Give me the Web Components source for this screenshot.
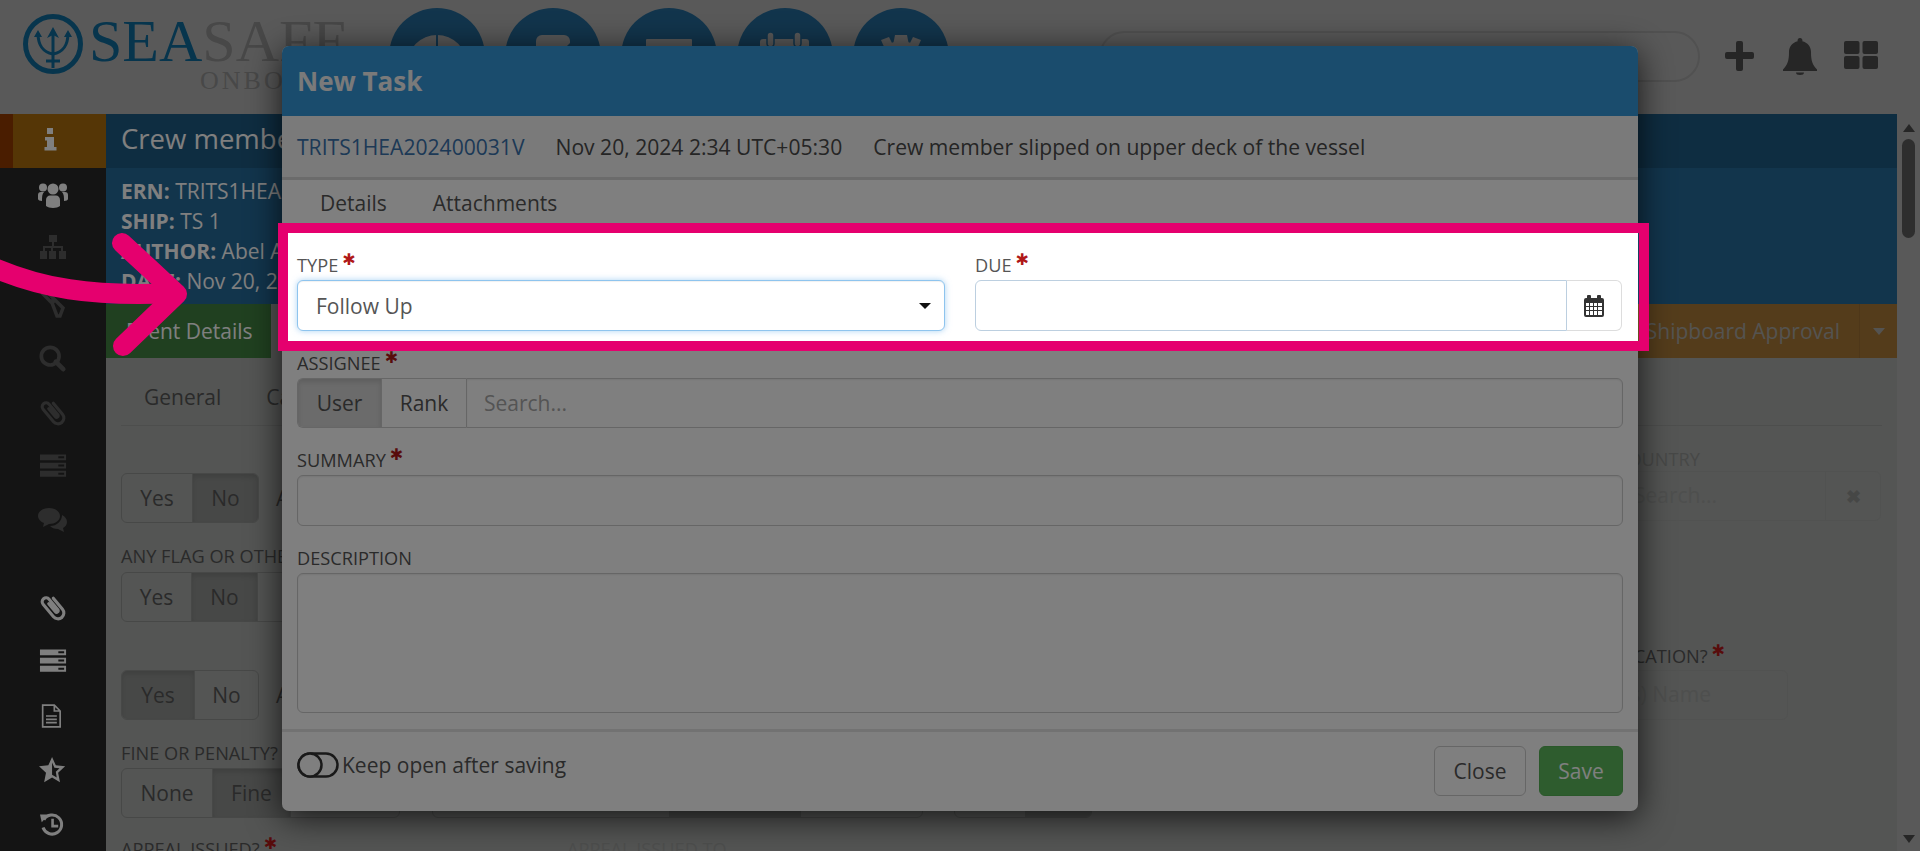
<!DOCTYPE html>
<html lang="en">
<head>
<meta charset="utf-8">
<title>New Task</title>
<style>
  html, body { margin: 0; height: 100%; overflow: hidden; font-family: "Open Sans", "Noto Sans", sans-serif; background: #b3b3b3; }
</style>
</head>
<body>
<sea-app></sea-app>

<script>
class SeaHeader extends HTMLElement {
  constructor() {
    super();
    this.attachShadow({ mode: 'open' }).innerHTML = `
      <style>
        :host { display: flex; height: 114px; background: #b3b3b3; align-items: flex-start; }
        .logo { width: 389px; height: 114px; display: flex; box-sizing: border-box; padding: 14px 0 0 23px; font-family: "Liberation Serif", serif; }
        .logo svg { width: 60px; height: 60px; flex: none; }
        .word { margin-left: 6px; position: relative; }
        .big { font-size: 60px; line-height: 54px; color: #909090; white-space: nowrap; height: 54px; }
        .big b { font-weight: 400; color: #0f6a9a; }
        .small { font-size: 26px; line-height: 26px; letter-spacing: 3px; color: #909090; margin: 0 0 0 111px; }
        nav { display: flex; gap: 20px; margin-top: 8px; }
        .round { width: 96px; height: 96px; border-radius: 50%; background: #246a99; }
        .round svg { width: 96px; height: 96px; display: block; }
        .search { width: 601px; height: 51px; box-sizing: border-box; border: 2px solid #a2a2a2; border-radius: 26px; margin: 31px 0 0 150px; }
        .tools { display: flex; margin: 38px 0 0 25px; }
        .tools svg { display: block; fill: #4c4c4c; }
      </style>
      <div class="logo">
        <svg viewBox="0 0 60 60">
          <circle cx="30" cy="30" r="27.500" fill="none" stroke="#0f6a9a" stroke-width="5"/>
          <path d="M15 19C15 32 20 38 30 40C40 38 45 32 45 19" fill="none" stroke="#0f6a9a" stroke-width="3"/>
          <path d="M30 18V54M23 47H37" fill="none" stroke="#0f6a9a" stroke-width="3"/>
          <path d="M24 24L30 13L36 24L30 21zM11 23L15 16L19 23zM41 23L45 16L49 23z" fill="#0f6a9a"/>
        </svg>
        <div class="word">
          <div class="big"><b>SEA</b>SAFE</div>
          <div class="small">ONBOARD</div>
        </div>
      </div>
      <nav>
        <div class="round"><svg viewBox="0 0 96 96"><circle cx="48" cy="57" r="30" fill="#b3b3b3"/><path d="M47 25h2v32h-2z" fill="#246a99"/></svg></div>
        <div class="round"><svg viewBox="0 0 96 96"><rect x="31" y="27" width="34" height="40" rx="6" fill="#b3b3b3"/><path d="M48 52l18-18 5 5-18 18z" fill="#246a99"/></svg></div>
        <div class="round"><svg viewBox="0 0 96 96"><rect x="25" y="31" width="46" height="8" rx="1" fill="#b3b3b3"/><rect x="25" y="42" width="46" height="30" rx="2" fill="#b3b3b3"/></svg></div>
        <div class="round"><svg viewBox="0 0 96 96"><rect x="23" y="31" width="49" height="42" rx="3" fill="#b3b3b3"/><rect x="30" y="24" width="7" height="15" rx="3.500" fill="#b3b3b3" stroke="#246a99" stroke-width="1.500"/><rect x="57" y="24" width="7" height="15" rx="3.500" fill="#b3b3b3" stroke="#246a99" stroke-width="1.500"/></svg></div>
        <div class="round"><svg viewBox="0 0 96 96"><circle cx="48" cy="57" r="24" fill="#b3b3b3"/><path d="M42 27h12l2 10-16 0zM28 32l8-3 4 8-8 4zM68 32l-8-3-4 8 8 4z" fill="#b3b3b3"/></svg></div>
      </nav>
      <div class="search"></div>
      <div class="tools">
        <svg width="29" height="30" viewBox="0 0 29 30" style="margin-top:3px"><path d="M11 2a2 2 0 0 1 2-2h3a2 2 0 0 1 2 2v9h9a2 2 0 0 1 2 2v3a2 2 0 0 1-2 2h-9v10a2 2 0 0 1-2 2h-3a2 2 0 0 1-2-2V18H2a2 2 0 0 1-2-2v-3a2 2 0 0 1 2-2h9z"/></svg>
        <svg width="34" height="37" viewBox="0 0 34 37" style="margin-left:29px"><path d="M17 0a2.400 2.400 0 0 1 2.300 3.200C24.500 4.300 28 8.700 28 14c0 9 1.500 12.500 6 17.500V33H0v-1.500C4.500 26.500 6 23 6 14c0-5.300 3.500-9.700 8.700-10.800A2.400 2.400 0 0 1 17 0zM13 34.500h8a4 2.500 0 0 1-8 0z"/></svg>
        <svg width="34" height="28" viewBox="0 0 34 28" style="margin:3px 0 0 27px"><rect width="15.500" height="13" rx="2"/><rect x="18.500" width="15.500" height="13" rx="2"/><rect y="15" width="15.500" height="13" rx="2"/><rect x="18.500" y="15" width="15.500" height="13" rx="2"/></svg>
      </div>
    `;
  }
}

class SeaSidebar extends HTMLElement {
  constructor() {
    super();
    const dim = '#5a5a5a';
    const clip = '<g transform="translate(15 14) scale(1.3) rotate(-40) translate(-12 -12)"><path fill="none" stroke="currentColor" stroke-width="2.400" stroke-linecap="round" d="M16.500 7v11a4.500 4.500 0 0 1-9 0V5.500a3 3 0 0 1 6 0V16a1.200 1.200 0 0 1-2.400 0V8"/></g>';
    const server = '<path d="M1 1h27v6H1zM1 9.500h27v6H1zM1 18h27v6H1z"/><path d="M20 3h6v2h-6zM20 11.500h6v2h-6zM20 20h6v2h-6z" fill="#282828"/>';
    const items = [
      ['<path d="M9 1h6v6H9zM7 10h9v10h2.500v3.500h-12V20H9v-6.500H7z"/>', '#fff', 30],
      ['<circle cx="15" cy="8" r="5.500"/><circle cx="5" cy="6.500" r="4"/><circle cx="25" cy="6.500" r="4"/><path d="M8 25v-6c0-3 2-4.500 4-4.500h6c2 0 4 1.500 4 4.500v6c-3 2.500-11 2.500-14 0zM0 18v-4c0-2 1-3 3-3h3c-2 2-2 5-2 9-2 0-4-1-4-2zM30 18v-4c0-2-1-3-3-3h-3c2 2 2 5 2 9 2 0 4-1 4-2z"/>', '#fff', 30],
      ['<path d="M11 0h8v7h-3v4h9v5h3v8h-7v-8h2v-3h-8v3h3v8h-7v-8h2v-3H7v3h2v8H2v-8h3v-5h9V7h-3z"/>', dim, 30],
      ['<path fill="none" stroke="currentColor" stroke-width="3.500" d="M5 4l3-3 8 8-3 3zM14 13l3-3 8 8-3 8-3 0z"/>', dim, 30],
      ['<circle cx="12" cy="12" r="9.500" fill="none" stroke="currentColor" stroke-width="4"/><path d="M18 18l8 8" stroke="currentColor" stroke-width="5" stroke-linecap="round"/>', dim, 28],
      [clip, dim, 30],
      [server, dim, 29],
      ['<path d="M11 1c6 0 11 3.500 11 8s-5 8-11 8l-6 3 1-4C3 15 0 12 0 9c0-4.500 5-8 11-8z"/><path d="M24 8c3 1.500 5 4 5 7s-2 5-4 6l1 4-6-3c-4 0-6-1-8-3 7 0 12-5 12-11z"/>', dim, 30],
      [clip, '#fff', 30],
      [server, '#fff', 29],
      ['<path fill="none" stroke="currentColor" stroke-width="2" d="M2 1h14l7 7v19H2zM16 1v7h7"/><path d="M6 13h13v2H6zM6 17h13v2H6zM6 21h13v2H6z"/>', '#fff', 25],
      ['<path fill-rule="evenodd" d="M14 0l4 9 10 1-7.500 7 2 10-8.500-5-8.500 5 2-10L0 10l10-1zM14 6v13l5 3-1-6 4-4-5.500-.5z"/>', '#fff', 28],
      ['<path fill="none" stroke="currentColor" stroke-width="3.500" d="M4.500 9a11 11 0 1 1-1 9"/><path d="M0 3l10 0-8 9z"/><path d="M13 8h3v7h5v3h-8z"/>', '#fff', 26]
    ];
    const cells = items.map(([art, color, size], i) => `
      <div class="cell ${i === 0 ? 'on' : ''} ${i === 8 ? 'gap' : ''}" style="color:${color}">
        <svg width="${size}" height="30" viewBox="0 0 30 28" preserveAspectRatio="xMidYMid meet" fill="currentColor">${art}</svg>
      </div>`).join('');
    this.attachShadow({ mode: 'open' }).innerHTML = `
      <style>
        :host { display: block; width: 106px; background: #282828; flex: none; }
        .cell { height: 54.300px; display: flex; align-items: center; justify-content: center; }
        .on { height: 54px; background: #aa6d0d; border-left: 13px solid #943a00; box-sizing: border-box; padding-right: 13px; }
        .gap { margin-top: 32px; }
      </style>
      ${cells}
    `;
  }
}

class BtnGroup extends HTMLElement {
  constructor() {
    super();
    this.attachShadow({ mode: 'open' }).innerHTML = `
      <style>
        :host { display: inline-flex; border: 1.500px solid var(--line, #8f918f); border-radius: 6px; height: 50px; box-sizing: border-box; flex: none; overflow: hidden; }
      </style>
      <slot></slot>
    `;
  }
}

class GroupBtn extends HTMLElement {
  constructor() {
    super();
    this.attachShadow({ mode: 'open' }).innerHTML = `
      <style>
        :host { display: flex; align-items: center; justify-content: center; font-size: 21px; color: var(--ink, #555); box-sizing: border-box; border-left: 1.500px solid var(--line, #8f918f); }
        :host(:first-child) { border-left: 0; }
        :host([on]) { background: var(--active, #8f918f); box-shadow: inset 0 3px 5px rgba(0,0,0,.12); }
      </style>
      <slot></slot>
    `;
  }
}

class FieldLabel extends HTMLElement {
  constructor() {
    super();
    this.attachShadow({ mode: 'open' }).innerHTML = `
      <style>
        :host { display: block; font-size: 18.200px; line-height: 24px; height: 24px; color: var(--ink, #555); white-space: nowrap; }
        i { font-style: normal; font-size: 16px; line-height: 0; color: #b01818; position: relative; top: -7px; font-family: "DejaVu Sans", sans-serif; display: none; margin-left: 4px; }
        :host([req]) i { display: inline; }
      </style>
      <slot></slot><i>✱</i>
    `;
  }
}

class SeaRecord extends HTMLElement {
  constructor() {
    super();
    this.attachShadow({ mode: 'open' }).innerHTML = `
      <style>
        :host { display: block; flex: 1; min-width: 0; font-size: 21px; color: #555; background: #a8aaa8; height: 737px; overflow: hidden; }
        .title { height: 54px; background: #1d5a82; color: #fff; font-size: 27.500px; line-height: 50px; padding-left: 15px; white-space: nowrap; }
        .info { height: 136px; background: #246a99; color: #fff; padding: 8px 15px 0; box-sizing: border-box; font-size: 21px; line-height: 30px; }
        .info b { font-weight: 700; }
        .bar { height: 54px; display: flex; justify-content: space-between; }
        .green { width: 165px; background: #408140; color: #fff; line-height: 54px; padding-left: 20px; box-sizing: border-box; white-space: nowrap; overflow: hidden; }
        .amber { width: 520px; background: #a87937; display: flex; align-items: center; justify-content: flex-end; }
        .amber span { padding-right: 19px; line-height: 52px; color: #a9a7a2; }
        .caret { width: 37px; height: 100%; border-left: 1px solid #9c6f33; display: flex; align-items: center; justify-content: center; }
        .caret::after { content: ""; border: 6px solid transparent; border-top: 7px solid #a9a7a2; border-bottom: 0; }
        .form { padding: 0 15px; }
        .tabs { height: 68px; border-bottom: 1.500px solid #9b9d9b; display: flex; align-items: center; gap: 45px; padding: 0 23px; box-sizing: border-box; }
        .tabs span { position: relative; top: 5px; }
        .row { display: flex; align-items: flex-start; }
        .tail { margin-left: 17px; line-height: 50px; white-space: nowrap; }
        .r1 { margin-top: 47px; justify-content: space-between; }
        .r1 .right { display: flex; flex-direction: column; margin-right: 1px; margin-top: -26px; }
        .country { width: 265px; height: 50px; border: 1.500px solid #a3a5a3; border-radius: 6px; box-sizing: border-box; display: flex; color: #9c9e9c; }
        .country span { flex: 1; padding: 0 0 0 17px; line-height: 46px; }
        .country em { width: 54px; border-left: 1.500px solid #a3a5a3; font-style: normal; display: flex; align-items: center; justify-content: center; font-weight: 700; font-size: 18px; color: #8d8f8d; }
        .flag { margin-top: 21px; }
        .r2 { margin-top: 4px; }
        .r3 { margin-top: 48px; justify-content: space-between; }
        .auth { margin: -26px 94px 0 0; width: 300px; }
        .auth .box { height: 50px; border: 1.500px solid #a3a5a3; border-radius: 6px; box-sizing: border-box; text-align: right; padding-right: 76px; line-height: 46px; color: #9c9e9c; }
        .auth field-label { text-align: right; margin-right: 63px; margin-bottom: 2px; }
        .fine { margin-top: 21px; }
        .r4 { margin-top: 3px; }
        .blank { height: 50px; border: 1.500px solid #8f918f; border-radius: 6px; box-sizing: border-box; display: flex; overflow: hidden; }
        .blank div { background: #8f918f; }
        .appeal { margin-top: 19px; display: flex; }
        .appeal .to { margin-left: 290px; color: #9b9d9b; }
      </style>
      <div class="title">Crew member slipped on upper deck of the vessel</div>
      <div class="info">
        <div><b>ERN:</b> TRITS1HEA202400031V</div>
        <div><b>SHIP:</b> TS 1</div>
        <div><b>AUTHOR:</b> Abel Adams</div>
        <div><b>DATE:</b> Nov 20, 2024</div>
      </div>
      <div class="bar">
        <div class="green">Event Details</div>
        <div class="amber"><span>Shipboard Approval</span><div class="caret"></div></div>
      </div>
      <div class="form">
        <div class="tabs"><span>General</span><span>Casualty</span></div>
        <div class="row r1">
          <btn-group><group-btn style="width:70px">Yes</group-btn><group-btn style="width:66px" on>No</group-btn></btn-group>
          <div class="tail" style="flex:1">Any</div>
          <div class="right">
            <field-label style="color:#8f918f">COUNTRY</field-label>
            <div class="country"><span>Search...</span><em>✖</em></div>
          </div>
        </div>
        <field-label class="flag">ANY FLAG OR OTHER</field-label>
        <div class="row r2">
          <btn-group><group-btn style="width:69px">Yes</group-btn><group-btn style="width:66px" on>No</group-btn><group-btn style="width:60px"></group-btn></btn-group>
        </div>
        <div class="row r3">
          <btn-group><group-btn style="width:72px" on>Yes</group-btn><group-btn style="width:64px">No</group-btn></btn-group>
          <div class="tail" style="flex:1">Any</div>
          <div class="auth">
            <field-label req>CLASSIFICATION?</field-label>
            <div class="box">(s) Name</div>
          </div>
        </div>
        <field-label class="fine">FINE OR PENALTY?</field-label>
        <div class="row r4" style="gap:32px">
          <btn-group><group-btn style="width:90px">None</group-btn><group-btn style="width:78px" on>Fine</group-btn><group-btn style="width:109px">Warn</group-btn></btn-group>
          <div class="blank" style="width:491px"><div style="margin-left:236px;width:132px"></div></div>
          <div class="blank" style="width:138px;margin-left:-1px"><div style="margin-left:70px;width:68px"></div></div>
        </div>
        <div class="appeal">
          <field-label req>APPEAL ISSUED?</field-label>
          <field-label class="to">APPEAL ISSUED TO</field-label>
        </div>
      </div>
    `;
  }
}

class TaskModal extends HTMLElement {
  constructor() {
    super();
    this.attachShadow({ mode: 'open' }).innerHTML = `
      <style>
        :host { display: flex; flex-direction: column; position: absolute; left: 282px; top: 46px; width: 1356px; height: 765px; background: #fff; border-radius: 7px; box-shadow: 0 6px 34px rgba(0,0,0,.75); overflow: hidden; font-size: 21px; color: #555; --ink: #555; --line: #ccc; --active: #d6d6d6; }
        header { height: 70px; background: #3498db; font-size: 26px; font-weight: 700; line-height: 70px; padding-left: 15px; flex: none; color: #f4f4f4; }
        .sub { background: #f5f5f5; border-bottom: 3px solid #d6d6d6; display: flex; align-items: center; padding: 0 0 0 15px; flex: none; height: 61px; white-space: nowrap; font-size: 21.100px; }
        .sub a { color: #3a72ad; margin-right: 31px; }
        .sub span { margin-right: 31px; color: #4a4a4a; }
        .tabs { height: 46px; display: flex; padding-left: 38px; gap: 46px; align-items: center; flex: none; }
        form { flex: 1; padding: 27px 15px 0; display: flex; flex-direction: column; }
        .pair { display: grid; grid-template-columns: 648px 647px; gap: 30px; }
        .ctl { height: 51px; box-sizing: border-box; border: 1.500px solid #ccc; border-radius: 6px; margin-top: 3px; display: flex; align-items: center; background: #fff; box-shadow: inset 0 1px 2px rgba(0,0,0,.08); }
        .field { margin-bottom: 20px; }
        .select { border-color: #8ec4ee; box-shadow: 0 0 6px rgba(102,175,233,.55), inset 0 1px 1px rgba(0,0,0,.06); padding: 0 13px 0 18px; justify-content: space-between; color: #555; }
        .select::after { content: ""; border: 6px solid transparent; border-top: 6px solid #111; border-bottom: 0; }
        .date { padding: 0; justify-content: flex-end; box-shadow: none; border: 0; }
        .date .in { flex: 1; height: 100%; box-sizing: border-box; border: 1.500px solid #bccfe0; border-right: 1px solid #bccfe0; border-radius: 6px 0 0 6px; }
        .date .add { width: 55px; height: 100%; box-sizing: border-box; border: 1.500px solid #ddd; border-left: 0; border-radius: 0 6px 6px 0; display: flex; align-items: center; justify-content: center; }
        .assign { display: flex; margin-top: 3px; }
        .assign btn-group { height: 50px; border-radius: 6px 0 0 6px; border-right: 0; }
        .assign .search { flex: 1; height: 50px; box-sizing: border-box; border: 1.500px solid #ccc; border-radius: 0 6px 6px 0; color: #a8a8a8; line-height: 49px; padding-left: 17px; box-shadow: inset 0 1px 2px rgba(0,0,0,.08); }
        .area { height: 140px; margin-bottom: 16px; }
        footer { border-top: 3px solid #e4e4e4; margin: 0 -15px; padding: 14px 15px 0; display: flex; align-items: flex-start; flex: 1; }
        .keep { display: flex; align-items: center; margin-top: 6px; height: 26px; color: #555; }
        .keep svg { margin-right: 3px; }
        .push { flex: 1; }
        button { font: inherit; height: 50px; border-radius: 6px; padding: 0; }
        .close { width: 92px; border: 1.500px solid #ccc; background: #fff; color: #555; margin-right: 13px; }
        .save { width: 84px; border: 1px solid #55b055; background: #5cb85c; color: #fff; }
      </style>
      <header>New Task</header>
      <div class="sub">
        <a>TRITS1HEA202400031V</a>
        <span>Nov 20, 2024 2:34 UTC+05:30</span>
        <span>Crew member slipped on upper deck of the vessel</span>
      </div>
      <div class="tabs"><span>Details</span><span>Attachments</span></div>
      <form>
        <div class="pair field">
          <div>
            <field-label req>TYPE</field-label>
            <div class="ctl select">Follow Up</div>
          </div>
          <div>
            <field-label req>DUE</field-label>
            <div class="ctl date">
              <div class="in"></div>
              <div class="add">
                <svg width="20" height="22" viewBox="0 0 20 22"><path fill="#333" fill-rule="evenodd" d="M4 0h2a1 1 0 0 1 1 1v2h6V1a1 1 0 0 1 1-1h2a1 1 0 0 1 1 1v2h1a2 2 0 0 1 2 2v15a2 2 0 0 1-2 2H2a2 2 0 0 1-2-2V5a2 2 0 0 1 2-2h1V1a1 1 0 0 1 1-1zM2 8v3h3V8zm4 0v3h3V8zm4 0v3h3V8zm4 0v3h4V8zM2 12v3h3v-3zm4 0v3h3v-3zm4 0v3h3v-3zm4 0v3h4v-3zM2 16v4h3v-4zm4 0v4h3v-4zm4 0v4h3v-4zm4 0v4h4v-4z"/></svg>
              </div>
            </div>
          </div>
        </div>
        <div class="field">
          <field-label req>ASSIGNEE</field-label>
          <div class="assign">
            <btn-group><group-btn style="width:83px" on>User</group-btn><group-btn style="width:85px">Rank</group-btn></btn-group>
            <div class="search">Search...</div>
          </div>
        </div>
        <div class="field">
          <field-label req>SUMMARY</field-label>
          <div class="ctl"></div>
        </div>
        <div>
          <field-label>DESCRIPTION</field-label>
          <div class="ctl area"></div>
        </div>
        <footer>
          <div class="keep">
            <svg width="42" height="26" viewBox="0 0 42 26"><rect x="1.500" y="1.500" width="39" height="23" rx="11.500" fill="none" stroke="#333" stroke-width="2.500"/><circle cx="13" cy="13" r="11.500" fill="#fff" stroke="#333" stroke-width="2.500"/></svg>
            Keep open after saving
          </div>
          <div class="push"></div>
          <button class="close" type="button">Close</button>
          <button class="save" type="button">Save</button>
        </footer>
      </form>
    `;
  }
}

class TourSpot extends HTMLElement {
  constructor() {
    super();
    this.attachShadow({ mode: 'open' }).innerHTML = `
      <style>
        :host { position: absolute; inset: 0; pointer-events: none; overflow: hidden; display: block; }
        .hole { position: absolute; left: 278px; top: 223px; width: 1371px; height: 128px; box-sizing: border-box; border: 10px solid #e5006e; box-shadow: 0 0 0 3000px rgba(0,0,0,.5); }
        svg { position: absolute; left: 0; top: 0; }
      </style>
      <div class="hole"></div>
      <svg width="200" height="400" viewBox="0 0 200 400" fill="none" stroke="#e5006e" stroke-width="20" stroke-linecap="round" stroke-linejoin="round">
        <path d="M-10 266C40 288 90 297 174 293"/>
        <path d="M122 243L177 294L123 346"/>
      </svg>
    `;
  }
}

class SeaApp extends HTMLElement {
  constructor() {
    super();
    this.attachShadow({ mode: 'open' }).innerHTML = `
      <style>
        :host { display: block; position: relative; width: 1920px; height: 851px; overflow: hidden; }
        main { display: flex; height: 737px; }
        .scroll { width: 23px; background: #b3b3b3; flex: none; display: flex; flex-direction: column; align-items: center; }
        .up { border: 6px solid transparent; border-bottom: 8px solid #4c4c4c; border-top: 0; margin-top: 10px; }
        .thumb { width: 13px; height: 99px; border-radius: 7px; background: #5c5c5c; margin-top: 7px; }
        .down { margin-top: auto; margin-bottom: 8px; border: 6px solid transparent; border-top: 8px solid #4c4c4c; border-bottom: 0; }
      </style>
      <sea-header></sea-header>
      <main>
        <sea-sidebar></sea-sidebar>
        <sea-record></sea-record>
        <div class="scroll"><div class="up"></div><div class="thumb"></div><div class="down"></div></div>
      </main>
      <task-modal></task-modal>
      <tour-spot></tour-spot>
    `;
  }
}

customElements.define('sea-header', SeaHeader);
customElements.define('sea-sidebar', SeaSidebar);
customElements.define('btn-group', BtnGroup);
customElements.define('group-btn', GroupBtn);
customElements.define('field-label', FieldLabel);
customElements.define('sea-record', SeaRecord);
customElements.define('task-modal', TaskModal);
customElements.define('tour-spot', TourSpot);
customElements.define('sea-app', SeaApp);
</script>
</body>
</html>
